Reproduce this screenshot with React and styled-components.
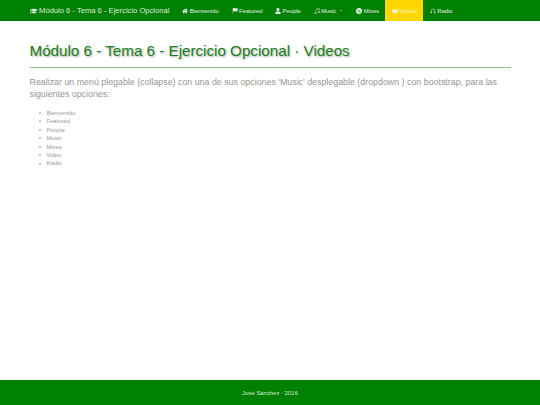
import React from 'react';
import styled, { createGlobalStyle } from 'styled-components';
import { BsFlagFill, BsMusicNoteBeamed, BsDiscFill, BsCameraVideoFill, BsHeadphones } from 'react-icons/bs';
import { FaHome, FaUser, FaGraduationCap } from 'react-icons/fa';

const Global = createGlobalStyle`
  html, body { margin: 0; padding: 0; background: #fff; }
  body { font-family: "Liberation Sans", Arial, sans-serif; }
`;
const Page = styled.div`
  min-height: 405px;
  display: flex;
  flex-direction: column;
`;
const Navbar = styled.nav`
  height: 21px;
  background: #008000;
  display: flex;
  padding-left: 29.5px;
  color: #fff;
`;
const Brand = styled.a`
  display: flex;
  align-items: center;
  gap: 1.6px;
  font-size: 7.6px;
  color: #dfeedf;
  margin-right: 6.6px;
  white-space: nowrap;
`;
const NavList = styled.ul`
  display: flex;
  list-style: none;
  margin: 0;
  padding: 0;
`;
const NavItem = styled.li`
  display: flex;
  align-items: center;
  gap: 1.4px;
  padding: 0 6.33px;
  font-size: 5.9px;
  white-space: nowrap;
  color: ${p => (p.$active ? '#fff3c0' : '#e4f0e4')};
  background: ${p => (p.$active ? '#ffd700' : 'transparent')};
  svg { flex: none; width: 6px; height: 6px; }
`;
const Caret = styled.span`
  width: 0;
  height: 0;
  margin: 0 2px 0 2px;
  border-left: 1.7px solid transparent;
  border-right: 1.7px solid transparent;
  border-top: 1.7px solid #e4f0e4;
`;
const Main = styled.main`
  flex: 1;
  padding: 0 29.5px;
`;
const Title = styled.h1`
  margin: 21px 0 0;
  padding-bottom: 8px;
  font-size: 15.2px;
  line-height: 17px;
  font-weight: 500;
  color: #1a801a;
  text-shadow: 1px 1px 2px #a8a8a8;
  border-bottom: 1px solid #8cc08c;
`;
const Lead = styled.p`
  margin: 7.7px 0 0;
  font-size: 8.86px;
  line-height: 12.6px;
  font-weight: 300;
  color: #969696;
`;
const Options = styled.ul`
  margin: 7.9px 0 0;
  padding: 0 0 0 16.9px;
  list-style: none;
  font-size: 5.9px;
  line-height: 8.43px;
  color: #999;
`;
const Option = styled.li`
  display: flex;
  align-items: center;
  &::before {
    content: '';
    flex: none;
    width: 2px;
    height: 2px;
    border-radius: 50%;
    background: #b5b5b5;
    margin-left: -7px;
    margin-right: 5px;
  }
`;
const Footer = styled.footer`
  height: 25px;
  background: #008000;
  color: #dcecdc;
  font-size: 5.9px;
  display: flex;
  align-items: center;
  justify-content: center;
`;

const items = [
  [FaHome, 'Bienvenido'],
  [BsFlagFill, 'Featured'],
  [FaUser, 'People'],
  [BsMusicNoteBeamed, 'Music', 'caret'],
  [BsDiscFill, 'Mixes'],
  [BsCameraVideoFill, 'Videos', 'active'],
  [BsHeadphones, 'Radio'],
];

export default function App() {
  return (
    <Page>
      <Global />
      <Navbar>
        <Brand><FaGraduationCap size={8} /> Módulo 6 - Tema 6 - Ejercicio Opcional</Brand>
        <NavList>
          {items.map(([Icon, label, flag]) => (
            <NavItem key={label} $active={flag === 'active'}>
              <Icon />{label}{flag === 'caret' && <Caret />}
            </NavItem>
          ))}
        </NavList>
      </Navbar>
      <Main>
        <Title>Módulo 6 - Tema 6 - Ejercicio Opcional · Videos</Title>
        <Lead>Realizar un menú plegable (collapse) con una de sus opciones 'Music' desplegable (dropdown ) con bootstrap, para las siguientes opciones:</Lead>
        <Options>
          {['Bienvenido','Featured','People','Music','Mixes','Video','Radio'].map(o => <Option key={o}>{o}</Option>)}
        </Options>
      </Main>
      <Footer>José Sánchez · 2016</Footer>
    </Page>
  );
}
